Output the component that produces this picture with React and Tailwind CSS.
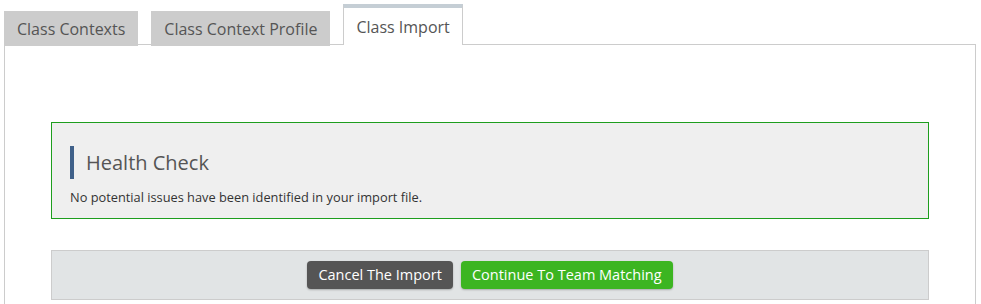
import React from 'react';

const TABS = [
  { label: 'Class Contexts', active: false },
  { label: 'Class Context Profile', active: false },
  { label: 'Class Import', active: true },
];

const Tab = ({ label, active }) => {
  if (active) {
    return (
      <div className="h-[41px] px-[12px] flex items-center bg-white border-t-[4px] border-t-[#c5ced5] border-x border-x-[#cccccc] text-[16px] text-[#555555]">
        {label}
      </div>
    );
  }
  return (
    <div className="h-[35px] px-[13px] mb-[-1px] flex items-center bg-[#cccccc] text-[16px] text-[#555555]">
      {label}
    </div>
  );
};

export default function App() {
  return (
    <div className="w-[981px] h-[304px] overflow-hidden bg-white font-['Open_Sans',sans-serif]">
      <div className="pl-[4px] pr-[5px] pt-[5px]">
        <div className="relative z-10 flex items-end gap-[13px] h-[40px] mb-[-1px]">
          {TABS.map(t => (
            <Tab key={t.label} {...t} />
          ))}
        </div>
        <div className="border border-[#cccccc] px-[46px] pt-[77px] pb-[20px]">
          <div className="border border-[#1e9e1e] bg-[#efefef] px-[18px] pt-[23px] pb-[12px]">
            <div className="flex items-center border-l-[4px] border-[#3f6089] h-[33px] pl-[12px]">
              <h2 className="text-[20px] text-[#555555] leading-none">Health Check</h2>
            </div>
            <p className="mt-[9px] text-[12.8px] text-[#333333] leading-[18px]">
              No potential issues have been identified in your import file.
            </p>
          </div>
          <div className="mt-[31px] border border-[#cccccc] bg-[#e1e4e5] flex justify-center gap-[8px] py-[10px]">
            <button className="h-[28px] px-[11px] rounded-[4px] bg-[#555555] text-white text-[14.5px] shadow-[0_1px_2px_rgba(0,0,0,0.25)]">
              Cancel The Import
            </button>
            <button className="h-[28px] px-[11px] rounded-[4px] bg-[#3cb521] text-white text-[14.5px] shadow-[0_1px_2px_rgba(0,0,0,0.25)]">
              Continue To Team Matching
            </button>
          </div>
        </div>
      </div>
    </div>
  );
}
